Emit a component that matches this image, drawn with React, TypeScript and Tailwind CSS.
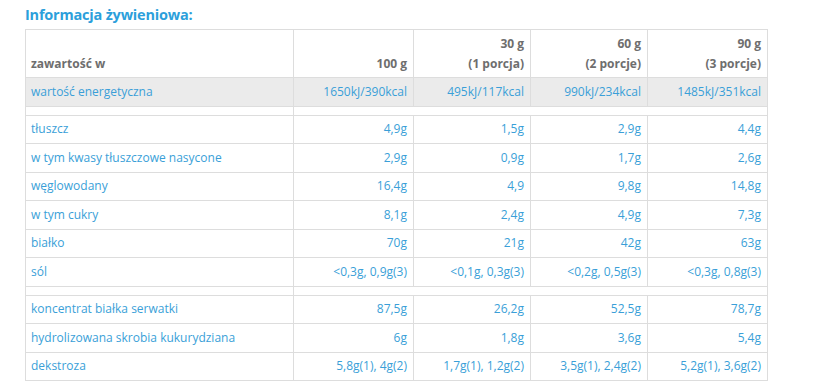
const rows1 = [
  ["tłuszcz", "4,9g", "1,5g", "2,9g", "4,4g"],
  ["w tym kwasy tłuszczowe nasycone", "2,9g", "0,9g", "1,7g", "2,6g"],
  ["węglowodany", "16,4g", "4,9", "9,8g", "14,8g"],
  ["w tym cukry", "8,1g", "2,4g", "4,9g", "7,3g"],
  ["białko", "70g", "21g", "42g", "63g"],
  ["sól", "<0,3g, 0,9g(3)", "<0,1g, 0,3g(3)", "<0,2g, 0,5g(3)", "<0,3g, 0,8g(3)"],
];

const rows2 = [
  ["koncentrat białka serwatki", "87,5g", "26,2g", "52,5g", "78,7g"],
  ["hydrolizowana skrobia kukurydziana", "6g", "1,8g", "3,6g", "5,4g"],
  ["dekstroza", "5,8g(1), 4g(2)", "1,7g(1), 1,2g(2)", "3,5g(1), 2,4g(2)", "5,2g(1), 3,6g(2)"],
];

const cell = "border border-[#dddddd] pl-[5px] pr-[6px] h-[28.5px] align-middle";

function DataRow({ row }: { row: string[] }) {
  return (
    <tr>
      <td className={`${cell} text-left`}>{row[0]}</td>
      {row.slice(1).map((v, i) => (
        <td key={i} className={`${cell} text-right`}>
          {v}
        </td>
      ))}
    </tr>
  );
}

function Spacer() {
  return (
    <tr>
      <td className="border border-[#dddddd] h-[9px] p-0" />
      <td colSpan={4} className="border border-[#dddddd] h-[9px] p-0" />
    </tr>
  );
}

export default function App() {
  return (
    <div
      className="w-[814px] h-[391px] bg-white overflow-hidden pl-[25px] pt-[4px]"
      style={{ fontFamily: '"Open Sans", "Noto Sans", sans-serif' }}
    >
      <h2 className="text-[14.5px] font-bold tracking-[-0.2px] text-[#2c9fdb] leading-[22px] h-[25px]">
        Informacja żywieniowa:
      </h2>
      <table className="table-fixed border-collapse w-[742px] text-[12px] text-[#3a9fd8] leading-[16px]">
        <colgroup>
          <col className="w-[268px]" />
          <col className="w-[120px]" />
          <col className="w-[117px]" />
          <col className="w-[117px]" />
          <col className="w-[120px]" />
        </colgroup>
        <thead>
          <tr className="text-[#6e6e6e] font-bold leading-[20px]">
            <th className="border border-[#dddddd] pl-[5px] pr-[6px] h-[48px] align-bottom pb-[3px] text-left">zawartość w</th>
            <th className="border border-[#dddddd] pl-[5px] pr-[6px] align-bottom pb-[3px] text-right">100 g</th>
            <th className="border border-[#dddddd] pl-[5px] pr-[6px] align-bottom pb-[3px] text-right">
              30 g<br />(1 porcja)
            </th>
            <th className="border border-[#dddddd] pl-[5px] pr-[6px] align-bottom pb-[3px] text-right">
              60 g<br />(2 porcje)
            </th>
            <th className="border border-[#dddddd] pl-[5px] pr-[6px] align-bottom pb-[3px] text-right">
              90 g<br />(3 porcje)
            </th>
          </tr>
        </thead>
        <tbody>
          <tr className="bg-[#ebebeb]">
            <td className={`${cell} text-left`}>wartość energetyczna</td>
            <td className={`${cell} text-right`}>1650kJ/390kcal</td>
            <td className={`${cell} text-right`}>495kJ/117kcal</td>
            <td className={`${cell} text-right`}>990kJ/234kcal</td>
            <td className={`${cell} text-right`}>1485kJ/351kcal</td>
          </tr>
          <Spacer />
          {rows1.map((r) => (
            <DataRow key={r[0]} row={r} />
          ))}
          <Spacer />
          {rows2.map((r) => (
            <DataRow key={r[0]} row={r} />
          ))}
        </tbody>
      </table>
    </div>
  );
}
